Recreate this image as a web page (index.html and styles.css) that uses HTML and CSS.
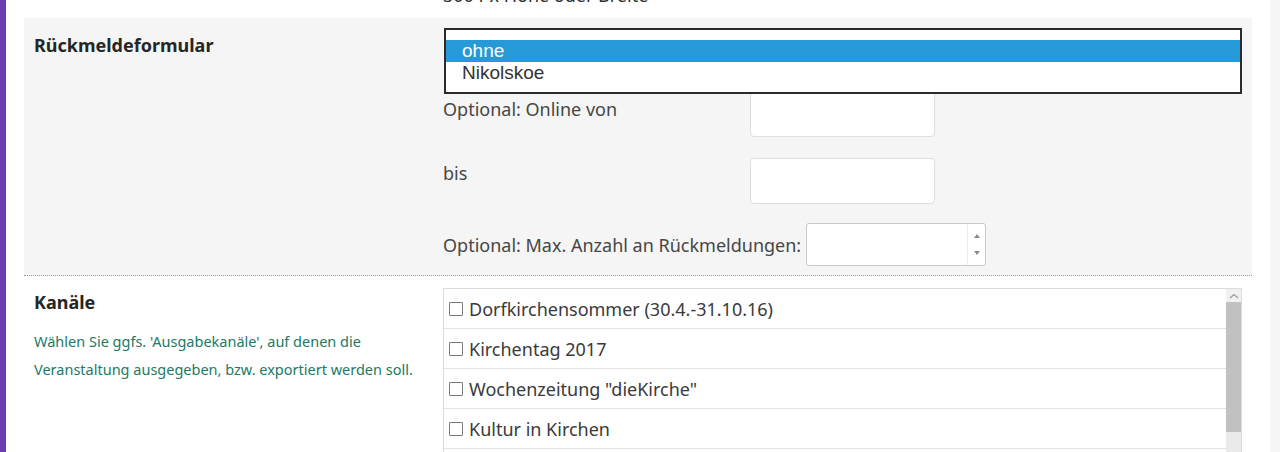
FILE: index.html
```html
<!DOCTYPE html>
<html lang="de">
<head>
  <meta charset="UTF-8">
  <meta name="viewport" content="width=device-width, initial-scale=1.0">
  <title>Veranstaltung bearbeiten</title>
  <link rel="stylesheet" href="styles.css">
</head>
<body>
  <div class="shell">
    <div class="accent"></div>

    <main class="form">
      <div class="row row-prev">
        <div class="row-label"></div>
        <div class="row-field">
          <p class="prev-hint">300 Px Höhe oder Breite</p>
        </div>
      </div>

      <section class="row row-grey">
        <div class="row-label">
          <h3>Rückmeldeformular</h3>
        </div>
        <div class="row-field">
          <div class="select-closed"></div>

          <!-- open dropdown of the select, lies over the fields -->
          <ul class="dropdown">
            <li class="active">ohne</li>
            <li>Nikolskoe</li>
          </ul>

          <div class="pair">
            <label class="pair-label">Optional: Online von</label>
            <input class="text-input" type="text">
          </div>
          <div class="pair pair-bis">
            <label class="pair-label">bis</label>
            <input class="text-input" type="text">
          </div>
          <div class="pair pair-max">
            <label>Optional: Max. Anzahl an Rückmeldungen:</label>
            <div class="number-input">
              <input type="text">
              <div class="spinner">
                <span class="arrow-up"></span>
                <span class="arrow-down"></span>
              </div>
            </div>
          </div>
        </div>
      </section>

      <section class="row row-channels">
        <div class="row-label">
          <h3>Kanäle</h3>
          <p class="help">Wählen Sie ggfs. 'Ausgabekanäle', auf denen die Veranstaltung ausgegeben, bzw. exportiert werden soll.</p>
        </div>
        <div class="row-field">
          <div class="channel-box">
            <ul class="channel-list">
              <li><span class="check"></span>Dorfkirchensommer (30.4.-31.10.16)</li>
              <li><span class="check"></span>Kirchentag 2017</li>
              <li><span class="check"></span>Wochenzeitung "dieKirche"</li>
              <li><span class="check"></span>Kultur in Kirchen</li>
            </ul>
            <div class="scrollbar">
              <div class="scroll-up">
                <svg width="10" height="6" viewBox="0 0 10 6"><path d="M1 5 L5 1.5 L9 5" fill="none" stroke="#9a9a9a" stroke-width="1.2"/></svg>
              </div>
              <div class="scroll-thumb"></div>
              <div class="scroll-track"></div>
            </div>
          </div>
        </div>
      </section>
    </main>

    <div class="side-gap"></div>
    <div class="side-strip"></div>
  </div>
</body>
</html>
```

FILE: styles.css
```css
body {
  margin: 0;
  font-family: "Noto Sans", "Open Sans", sans-serif;
  color: #464646;
  background: #fff;
  overflow: hidden;
}

.shell {
  display: flex;
  height: 452px;
}

.accent {
  width: 6px;
  background: #6b3db3;
  margin-right: 18px;
}

.form {
  width: 1228px;
  flex: none;
}

.side-gap {
  width: 18px;
}

.side-strip {
  flex: 1;
  background: #f7f7f7;
}

.row {
  display: grid;
  grid-template-columns: 419px 1fr;
  padding-right: 10px;
}

.row-label {
  padding-left: 10px;
}

.row-label h3 {
  margin: 0;
  font-size: 18px;
  font-weight: bold;
  color: #262626;
}

.row-field {
  position: relative;
}

/* the row above, cut off by the window */
.row-prev {
  height: 18px;
}

.prev-hint {
  margin: -15px 0 0 0;
  line-height: 20px;
  font-size: 18px;
  color: #2e2e2e;
}

/* Rückmeldeformular */
.row-grey {
  background: #f5f5f5;
  padding-top: 10px;
  padding-bottom: 9px;
  border-bottom: 1px dotted #9a9a9a;
}

.row-grey .row-label h3 {
  padding-top: 6px;
  line-height: 22px;
}

.select-closed {
  height: 53px;
}

.dropdown {
  position: absolute;
  top: 0;
  left: 1px;
  width: 794px;
  margin: 0;
  padding: 10px 0 8px 0;
  list-style: none;
  background: #fff;
  border: 2px solid #2b2b2b;
  font-family: "Liberation Sans", Arial, sans-serif;
  font-size: 19px;
}

.dropdown li {
  height: 22px;
  line-height: 22px;
  padding-left: 16px;
  color: #333;
}

.dropdown li.active {
  background: #2699d8;
  color: #fff;
}

.pair {
  display: flex;
  align-items: flex-start;
  margin-top: 10px;
}

.pair-bis {
  margin-top: 21px;
}

.pair-max {
  align-items: center;
  margin-top: 19px;
}

.pair label {
  font-size: 18px;
  line-height: 24px;
}

.pair-label {
  width: 307px;
  padding-top: 6px;
}

.pair-bis .pair-label {
  padding-top: 3px;
}

.text-input {
  width: 183px;
  height: 44px;
  box-sizing: content-box;
  padding: 0;
  border: 1px solid #dedede;
  border-radius: 4px;
  background: #fff;
}

.number-input {
  display: flex;
  margin-left: 5px;
  width: 178px;
  height: 41px;
  border: 1px solid #c9c9c9;
  border-radius: 3px;
  background: #fff;
}

.number-input input {
  flex: 1;
  border: none;
  background: transparent;
  min-width: 0;
}

.spinner {
  width: 17px;
  display: flex;
  flex-direction: column;
  align-items: center;
  justify-content: space-around;
  border-left: 1px solid #ececec;
  padding: 4px 0;
}

.arrow-up,
.arrow-down {
  width: 0;
  height: 0;
  border-left: 3px solid transparent;
  border-right: 3px solid transparent;
}

.arrow-up {
  border-bottom: 4px solid #8a8a8a;
}

.arrow-down {
  border-top: 4px solid #8a8a8a;
}

/* Kanäle */
.row-channels {
  padding-top: 12px;
}

.row-channels .row-label h3 {
  padding-top: 3px;
  line-height: 22px;
}

.help {
  margin: 14px 0 0 0;
  width: 390px;
  font-size: 14.5px;
  line-height: 28px;
  color: #217a63;
}

.channel-box {
  display: flex;
  height: 200px;
  border: 1px solid #dcdcdc;
  background: #fff;
}

.channel-list {
  flex: 1;
  margin: 0;
  padding: 0;
  list-style: none;
}

.channel-list li {
  height: 40px;
  box-sizing: border-box;
  display: flex;
  align-items: center;
  padding-left: 5px;
  border-bottom: 1px solid #e2e2e2;
  font-size: 18px;
  color: #3a3a3a;
}

.check {
  width: 12px;
  height: 12px;
  border: 1px solid #7a7a7a;
  border-radius: 1px;
  margin-right: 6px;
  flex: none;
}

.scrollbar {
  width: 15px;
  display: flex;
  flex-direction: column;
  background: #f1f1f1;
}

.scroll-up {
  height: 13px;
  display: flex;
  align-items: center;
  justify-content: center;
}

.scroll-thumb {
  height: 130px;
  background: #c1c1c1;
}

.scroll-track {
  flex: 1;
  background: #eaeaea;
}
```
